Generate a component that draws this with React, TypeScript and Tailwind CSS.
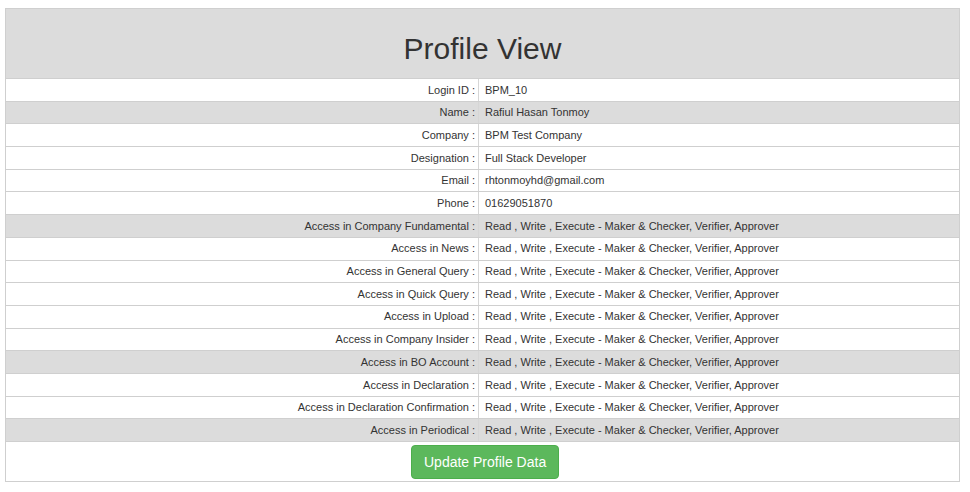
import React from 'react';

const perm = 'Read , Write , Execute - Maker & Checker, Verifier, Approver';

const rows: { label: string; value: string; grey?: boolean }[] = [
  { label: 'Login ID', value: 'BPM_10' },
  { label: 'Name', value: 'Rafiul Hasan Tonmoy', grey: true },
  { label: 'Company', value: 'BPM Test Company' },
  { label: 'Designation', value: 'Full Stack Developer' },
  { label: 'Email', value: 'rhtonmoyhd@gmail.com' },
  { label: 'Phone', value: '01629051870' },
  { label: 'Access in Company Fundamental', value: perm, grey: true },
  { label: 'Access in News', value: perm },
  { label: 'Access in General Query', value: perm },
  { label: 'Access in Quick Query', value: perm },
  { label: 'Access in Upload', value: perm },
  { label: 'Access in Company Insider', value: perm },
  { label: 'Access in BO Account', value: perm, grey: true },
  { label: 'Access in Declaration', value: perm },
  { label: 'Access in Declaration Confirmation', value: perm },
  { label: 'Access in Periodical', value: perm, grey: true },
];

export default function App() {
  return (
    <div className="min-h-screen bg-white pt-[8px] pl-[5px] font-['Liberation_Sans',Arial,sans-serif] text-[#333]">
      <div className="w-[955px] border border-[#cfcfcf]">
        <div className="flex h-[69px] items-center justify-center bg-[#dcdcdc] pt-[10px]">
          <h1 className="text-[30px] leading-none">Profile View</h1>
        </div>
        {rows.map((row) => (
          <div
            key={row.label}
            className={`grid h-[22.69px] grid-cols-[472px_1fr] border-t border-[#cfcfcf] text-[11px] ${
              row.grey ? 'bg-[#dcdcdc]' : 'bg-white'
            }`}
          >
            <div className="flex items-center justify-end pr-[3px]">{row.label} :</div>
            <div className="flex items-center border-l border-[#d6d6d6] pl-[6px]">{row.value}</div>
          </div>
        ))}
        <div className="grid h-[40px] grid-cols-[405px_1fr] border-t border-[#cfcfcf]">
          <div />
          <div className="pt-[3px]">
            <button className="h-[34px] rounded-[4px] border border-[#4cae4c] bg-[#5cb85c] px-[12px] text-[14px] text-white">
              Update Profile Data
            </button>
          </div>
        </div>
      </div>
    </div>
  );
}
